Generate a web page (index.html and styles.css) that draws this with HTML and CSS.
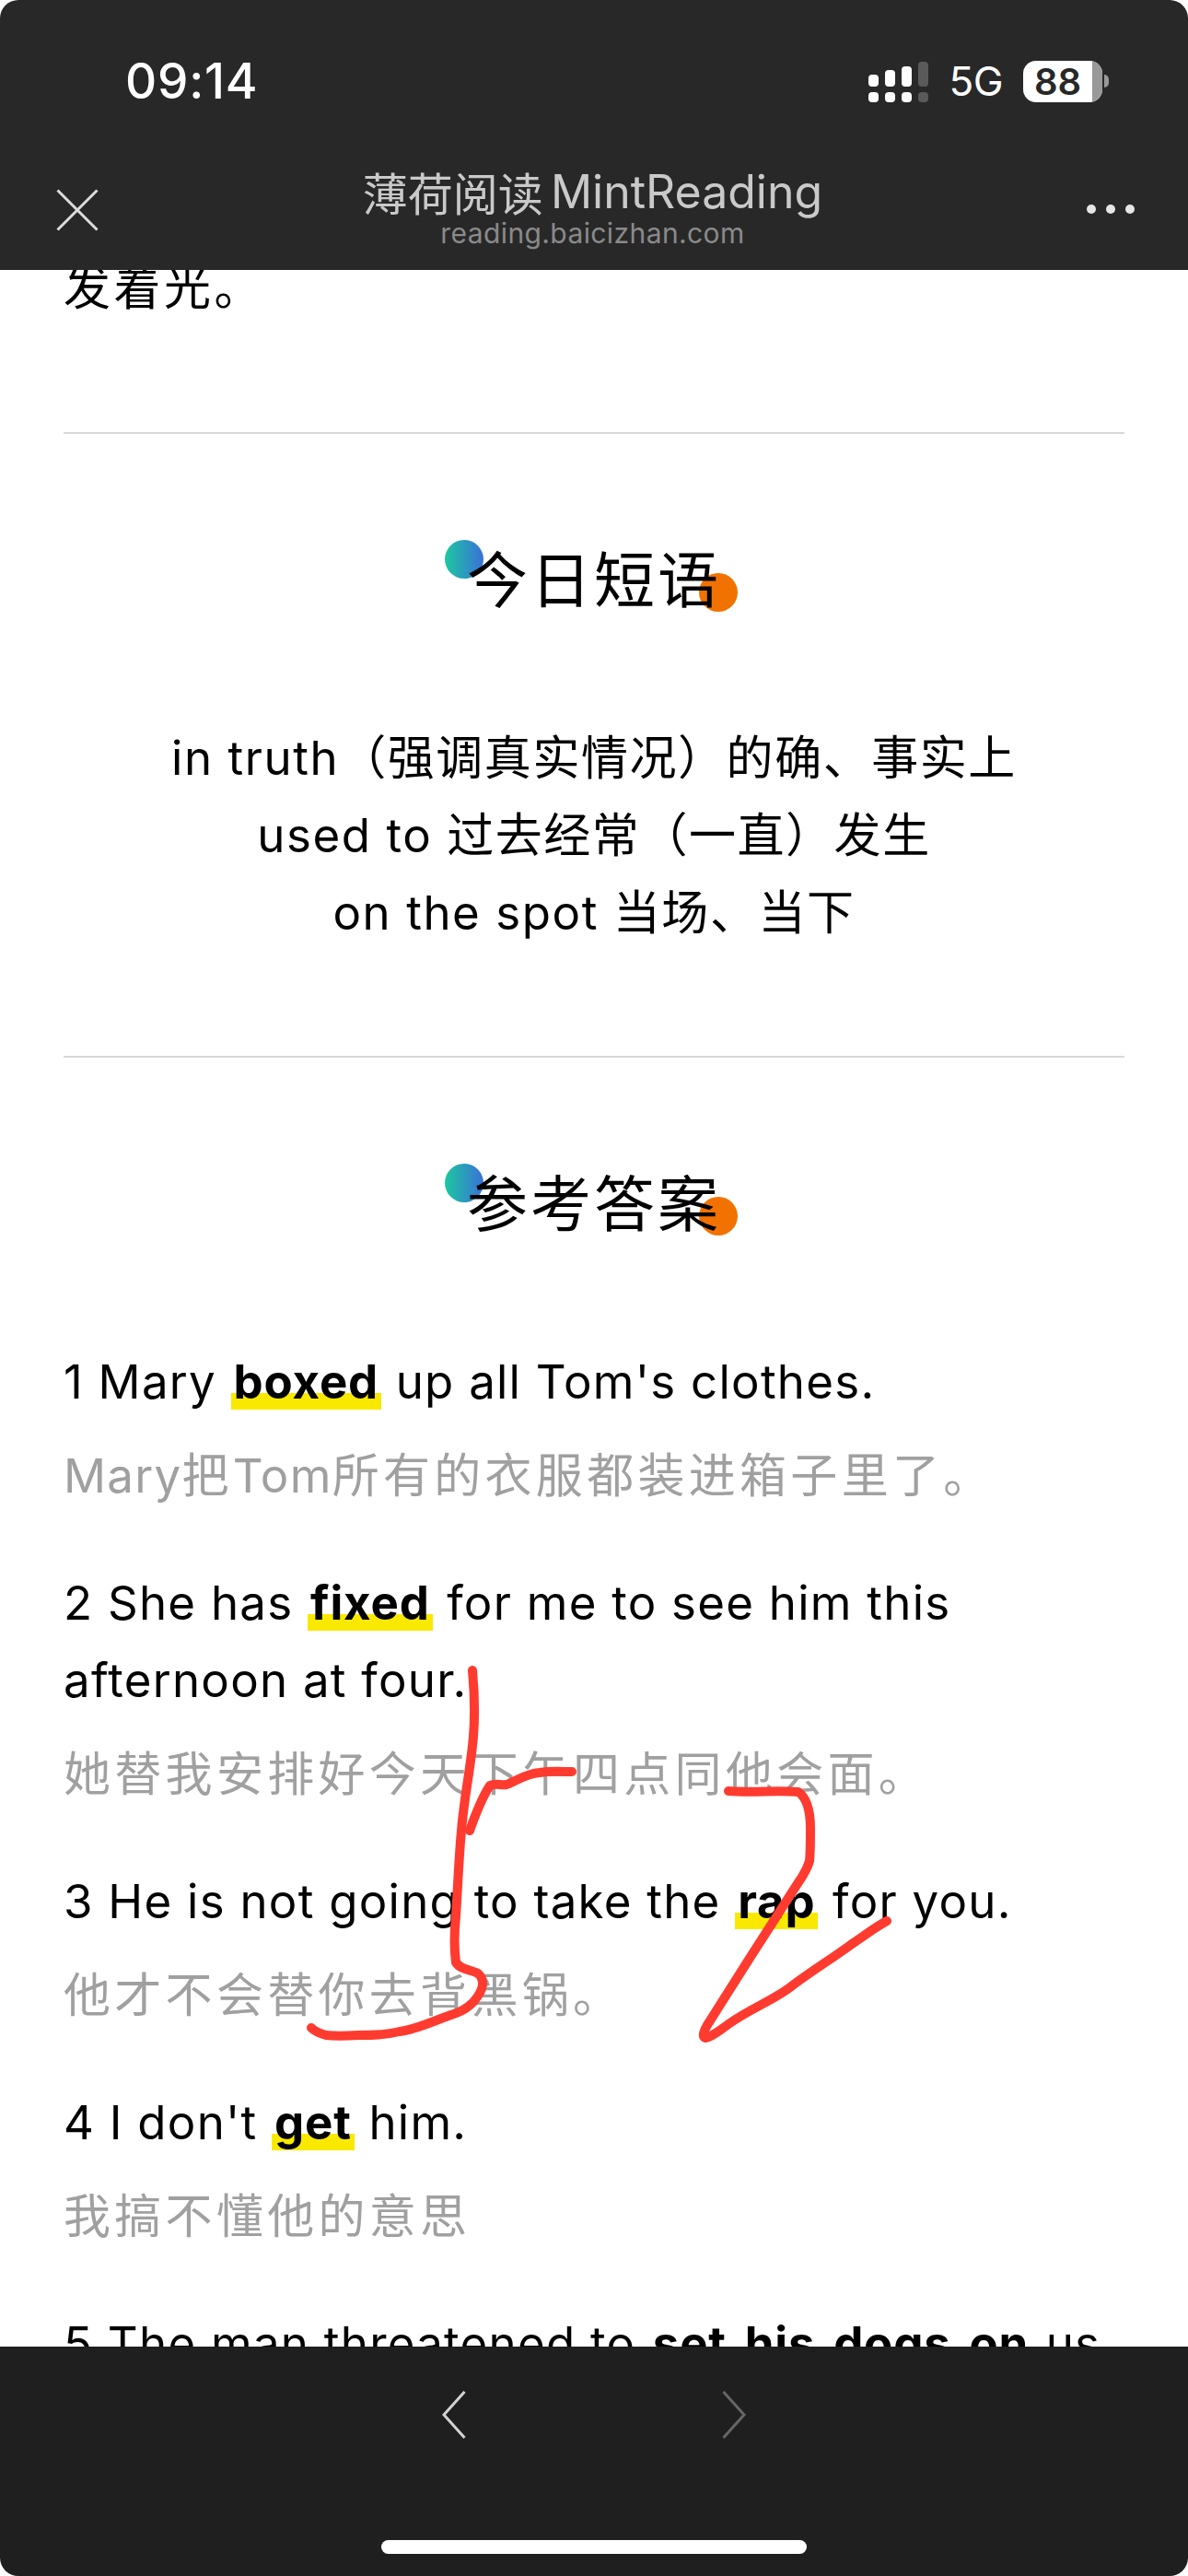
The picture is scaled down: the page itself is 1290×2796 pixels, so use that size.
FILE: index.html
```html
<!DOCTYPE html>
<html lang="zh">
<head>
<meta charset="utf-8">
<title>薄荷阅读 MintReading</title>
<link rel="stylesheet" href="styles.css">
</head>
<body>
<div class="page">
  <header class="topbar">
    <div class="status">
      <span class="time">09:14</span>
      <div class="status-right">
        <div class="signal">
          <div class="col"><i class="up h1"></i><i class="low"></i></div>
          <div class="col"><i class="up h2"></i><i class="low"></i></div>
          <div class="col"><i class="up h3"></i><i class="low"></i></div>
          <div class="col dim"><i class="up h4"></i><i class="low"></i></div>
        </div>
        <span class="net">5G</span>
        <div class="battery"><span class="level">88</span><i class="rest"></i></div>
        <i class="nub"></i>
      </div>
    </div>
    <div class="nav">
      <svg class="close" viewBox="0 0 46 46" width="46" height="46"><path d="M1.5 1.5 44.5 44.5M44.5 1.5 1.5 44.5" fill="none" stroke="#dcdcdc" stroke-width="3"/></svg>
      <div class="titles">
        <div class="title"><span class="cjk">薄荷阅读</span><span class="latin">MintReading</span></div>
        <div class="url">reading.baicizhan.com</div>
      </div>
      <div class="dots"><i></i><i></i><i></i></div>
    </div>
  </header>

  <main class="content">
    <div class="article">
      <p class="lead">发着光。</p>
      <hr class="rule">
      <h2 class="heading"><i class="dot teal"></i><i class="dot orange"></i><span>今日短语</span></h2>
      <div class="phrases">
        <p>in truth（强调真实情况）的确、事实上</p>
        <p>used to 过去经常（一直）发生</p>
        <p>on the spot 当场、当下</p>
      </div>
      <hr class="rule">
      <h2 class="heading"><i class="dot teal"></i><i class="dot orange"></i><span>参考答案</span></h2>
      <div class="answers">
        <div class="answer">
          <p class="en">1 Mary <b class="mark">boxed</b> up all Tom's clothes.</p>
          <p class="zh"><span class="name">Mary</span>把<span class="name">Tom</span>所有的衣服都装进箱子里了。</p>
        </div>
        <div class="answer">
          <p class="en">2 She has <b class="mark">fixed</b> for me to see him this afternoon at four.</p>
          <p class="zh">她替我安排好今天下午四点同他会面。</p>
        </div>
        <div class="answer">
          <p class="en">3 He is not going to take the <b class="mark">rap</b> for you.</p>
          <p class="zh">他才不会替你去背黑锅。</p>
        </div>
        <div class="answer">
          <p class="en">4 I don't <b class="mark">get</b> him.</p>
          <p class="zh">我搞不懂他的意思</p>
        </div>
        <div class="answer">
          <p class="en">5 The man threatened to <b class="mark">set his dogs on</b> us</p>
        </div>
      </div>
    </div>
  </main>

  <footer class="bottombar">
    <div class="arrows">
      <svg viewBox="0 0 26 52" width="26" height="52"><path d="M24.5 1 2 26 24.5 51" fill="none" stroke="#d2d2d2" stroke-width="3"/></svg>
      <svg viewBox="0 0 26 52" width="26" height="52"><path d="M1.5 1 24 26 1.5 51" fill="none" stroke="#666" stroke-width="3"/></svg>
    </div>
    <div class="home"></div>
  </footer>

  <svg class="ink" viewBox="0 0 1290 2796" width="1290" height="2796">
    <path d="M513 1813C515 1835 516 1860 514 1885C511 1920 504 1950 501 1987C498 2020 497 2050 495 2080C493 2100 493 2115 495 2130C500 2138 512 2138 519 2142C526 2148 527 2158 514 2173C505 2182 498 2184 487 2188C465 2196 450 2203 434 2205C418 2209 404 2209 389 2209C375 2210 362 2210 354 2209C347 2207 342 2205 338 2201"/>
    <path d="M510 1987C516 1970 524 1950 532 1938C538 1935 544 1938 550 1937C562 1932 572 1925 586 1924C598 1922 610 1923 621 1923"/>
    <path d="M791 1944C815 1946 845 1943 867 1945C874 1950 880 1962 880 1985C880 2000 880 2010 879 2020C876 2030 872 2036 867 2043L813 2127L768 2198C764 2205 762 2211 766 2212C772 2211 780 2205 791 2197C815 2180 838 2172 858 2157C880 2140 905 2125 925 2110C940 2100 950 2092 963 2085"/>
  </svg>
</div>
</body>
</html>
```
FILE: styles.css
```css
* { box-sizing: border-box; }
html, body { margin: 0; padding: 0; background: #fff; }
body { font-family: "Inter", "Noto Sans CJK SC", sans-serif; }
.page { position: relative; width: 1290px; height: 2796px; display: flex; flex-direction: column; overflow: hidden; background: #fff; }
i { display: block; }
p { margin: 0; }

.topbar { flex: none; height: 293px; background: #282828; border-radius: 20px 20px 0 0; color: #fff; padding-top: 58px; z-index: 2; }
.status { display: flex; justify-content: space-between; align-items: center; height: 60px; padding: 0 86px 0 136px; }
.time { font-size: 53px; font-weight: 500; letter-spacing: 0.8px; }
.status-right { display: flex; align-items: center; }
.signal { display: flex; gap: 7px; margin-left: 4px; }
.col { display: flex; flex-direction: column; justify-content: flex-end; gap: 6px; height: 45px; width: 11px; }
.col i { background: #fff; border-radius: 4px; width: 11px; }
.col.dim i { background: #5a5a5a; }
.low { height: 11px; }
.h1 { height: 13px; } .h2 { height: 18px; } .h3 { height: 22px; } .h4 { height: 27px; }
.net { font-size: 44px; margin: 0 22px; letter-spacing: -0.5px; }
.battery { position: relative; display: flex; width: 86px; height: 45px; border-radius: 14px; overflow: hidden; background: #fff; }
.level { width: 75px; color: #282828; font-size: 40px; font-weight: 600; line-height: 45px; text-align: center; letter-spacing: 0; }
.rest { flex: 1; background: #999; }
.nub { width: 5px; height: 14px; background: #999; border-radius: 0 5px 5px 0; margin-left: 2px; }

.nav { display: flex; justify-content: space-between; align-items: flex-start; height: 110px; padding: 62px 58px 0 61px; }
.close { margin-top: 25px; }
.titles { text-align: center; }
.title { display: flex; align-items: center; gap: 8px; font-size: 50px; line-height: 56px; color: #c9c9c9; white-space: nowrap; }
.cjk { font-family: "Noto Sans CJK SC", sans-serif; font-size: 49px; }
.url { font-size: 30px; line-height: 34px; color: #8a8a8a; letter-spacing: .4px; }
.dots { display: flex; gap: 11px; margin-top: 42px; }
.dots i { width: 10px; height: 10px; border-radius: 50%; background: #e6e6e6; }

.content { flex: 1; min-height: 0; overflow: hidden; }
.article { margin-top: -22px; padding: 0 69px; font-size: 51px; line-height: 84px; color: #000; letter-spacing: 1.25px; }
.lead { margin-bottom: 114px; letter-spacing: 3.5px; }
.rule { margin: 0 0 114px; border: 0; height: 2px; background: #d8d8d8; }
.heading { position: relative; margin: 0 0 106px; height: 90px; line-height: 90px; text-align: center; font-size: 66px; font-weight: 400; letter-spacing: 3px; }
.heading span { position: relative; }
.dot { position: absolute; width: 42px; height: 42px; border-radius: 50%; }
.teal { left: 414px; top: 1px; background: linear-gradient(90deg, #1cc8a0, #3a70d8); }
.orange { left: 690px; top: 37px; background: #f27200; }
.phrases { text-align: center; margin-bottom: 113px; letter-spacing: 1.55px; }
.answer { margin-bottom: 54px; }
.zh { margin-top: 18px; color: #a0a0a0; letter-spacing: 4.3px; }
.name { letter-spacing: 1.25px; }
.mark { padding: 0 3px; font-weight: 700; letter-spacing: .8px; word-spacing: 7px; background: linear-gradient(#f9e900, #f9e900) no-repeat 0 100% / 100% 18px; }

.bottombar { position: relative; flex: none; height: 249px; background: #1f1f1f; border-radius: 0 0 20px 20px; z-index: 2; }
.arrows { display: flex; justify-content: center; gap: 278px; padding-top: 48px; }
.home { position: absolute; left: 414px; top: 210px; width: 462px; height: 15px; border-radius: 8px; background: #fff; }

.ink { position: absolute; left: 0; top: 0; z-index: 3; pointer-events: none; }
.ink path { fill: none; stroke: #ff3b30; stroke-width: 10; stroke-linecap: round; stroke-linejoin: round; }
```
